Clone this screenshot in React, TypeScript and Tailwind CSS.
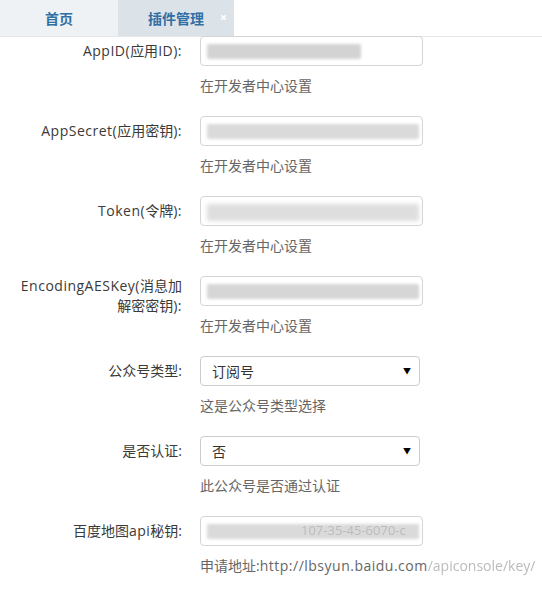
import React from "react";

const font = { fontFamily: '"Open Sans", "Noto Sans CJK SC", sans-serif' };

function L({ children }: { children: React.ReactNode }) {
  return <span className="tracking-[0.5px]">{children}</span>;
}

function Blur({ w, shade = "#d6d6d6" }: { w: number; shade?: string }) {
  return (
    <div className="flex items-center h-full pl-[6px]">
      <div className="h-[15px] rounded-[2px] blur-[1.5px]" style={{ width: w, background: shade }} />
    </div>
  );
}

function InputBox({ children }: { children?: React.ReactNode }) {
  return (
    <div className="h-[30px] w-[223px] border border-[#d4d4d4] rounded-[4px] bg-white overflow-hidden">
      {children}
    </div>
  );
}

function SelectBox({ value }: { value: string }) {
  return (
    <div className="h-[30px] w-[220px] border border-[#cccccc] rounded-[4px] bg-white flex items-center justify-between pl-[11px] pr-[8px] text-[14px] text-[#333]">
      <span>{value}</span>
      <span className="text-[8px] text-black">▼</span>
    </div>
  );
}

function Row({ label, help, children }: { label: React.ReactNode; help: React.ReactNode; children: React.ReactNode }) {
  return (
    <div className="flex h-[80px]">
      <div className="w-[182px] shrink-0 text-right text-[14px] text-[#3a3a3a] leading-[20px] pt-[5px]">
        {label}
      </div>
      <div className="ml-[18px] flex flex-col">
        {children}
        <div className="mt-[11px] text-[14px] leading-[18px] text-[#666]">{help}</div>
      </div>
    </div>
  );
}

export default function App() {
  return (
    <div className="w-[542px] h-[596px] bg-white overflow-hidden" style={font}>
      <div className="flex h-[37px] border-b border-[#e6e6e6]">
        <div className="w-[118px] bg-[#eff2f4] flex items-center justify-center text-[14px] font-bold text-[#2f6fa4]">
          首页
        </div>
        <div className="relative w-[116px] bg-[#dce3e8] flex items-center justify-center text-[14px] font-bold text-[#2f6fa4]">
          插件管理
          <span className="absolute left-[102px] top-[9px] text-[12px] text-white font-bold">×</span>
        </div>
      </div>
      <div className="-mt-[1px]">
        <Row label={<><L>AppID(</L>应用<L>ID):</L></>} help="在开发者中心设置">
          <InputBox>
            <Blur w={154} shade="#d3d3d3" />
          </InputBox>
        </Row>
        <Row label={<><L>AppSecret(</L>应用密钥<L>):</L></>} help="在开发者中心设置">
          <InputBox>
            <Blur w={212} shade="#dadada" />
          </InputBox>
        </Row>
        <Row label={<><L>Token(</L>令牌<L>):</L></>} help="在开发者中心设置">
          <InputBox>
            <div className="flex items-end h-full pl-[6px] pb-[4px]">
              <div className="h-[17px] w-[212px] bg-[#dedede] blur-[2px]" />
            </div>
          </InputBox>
        </Row>
        <Row
          label={
            <>
              <div className="-mt-[5px] leading-[20px]"><L>EncodingAESKey(</L>消息加</div>
              <div className="leading-[20px]">解密密钥<L>):</L></div>
            </>
          }
          help="在开发者中心设置"
        >
          <InputBox>
            <Blur w={212} shade="#d6d6d6" />
          </InputBox>
        </Row>
        <Row label="公众号类型:" help="这是公众号类型选择">
          <SelectBox value="订阅号" />
        </Row>
        <Row label="是否认证:" help="此公众号是否通过认证">
          <SelectBox value="否" />
        </Row>
        <Row
          label={<>百度地图<L>api</L>秘钥:</>}
          help={
            <span className="whitespace-nowrap">
              申请地址:<L>http://lbsyun.baidu.com</L><span className="text-[#bbb] blur-[0.4px]">/apiconsole/key/</span>
            </span>
          }
        >
          <InputBox>
            <div className="relative h-full">
              <div className="absolute left-[6px] top-[7px] h-[15px] w-[212px] bg-[#dadada] blur-[1.5px]" />
              <span className="absolute left-[100px] top-[4px] text-[13px] text-[#bbbbbb] blur-[0.6px] whitespace-nowrap">
                107-35-45-6070-c
              </span>
            </div>
          </InputBox>
        </Row>
      </div>
    </div>
  );
}
